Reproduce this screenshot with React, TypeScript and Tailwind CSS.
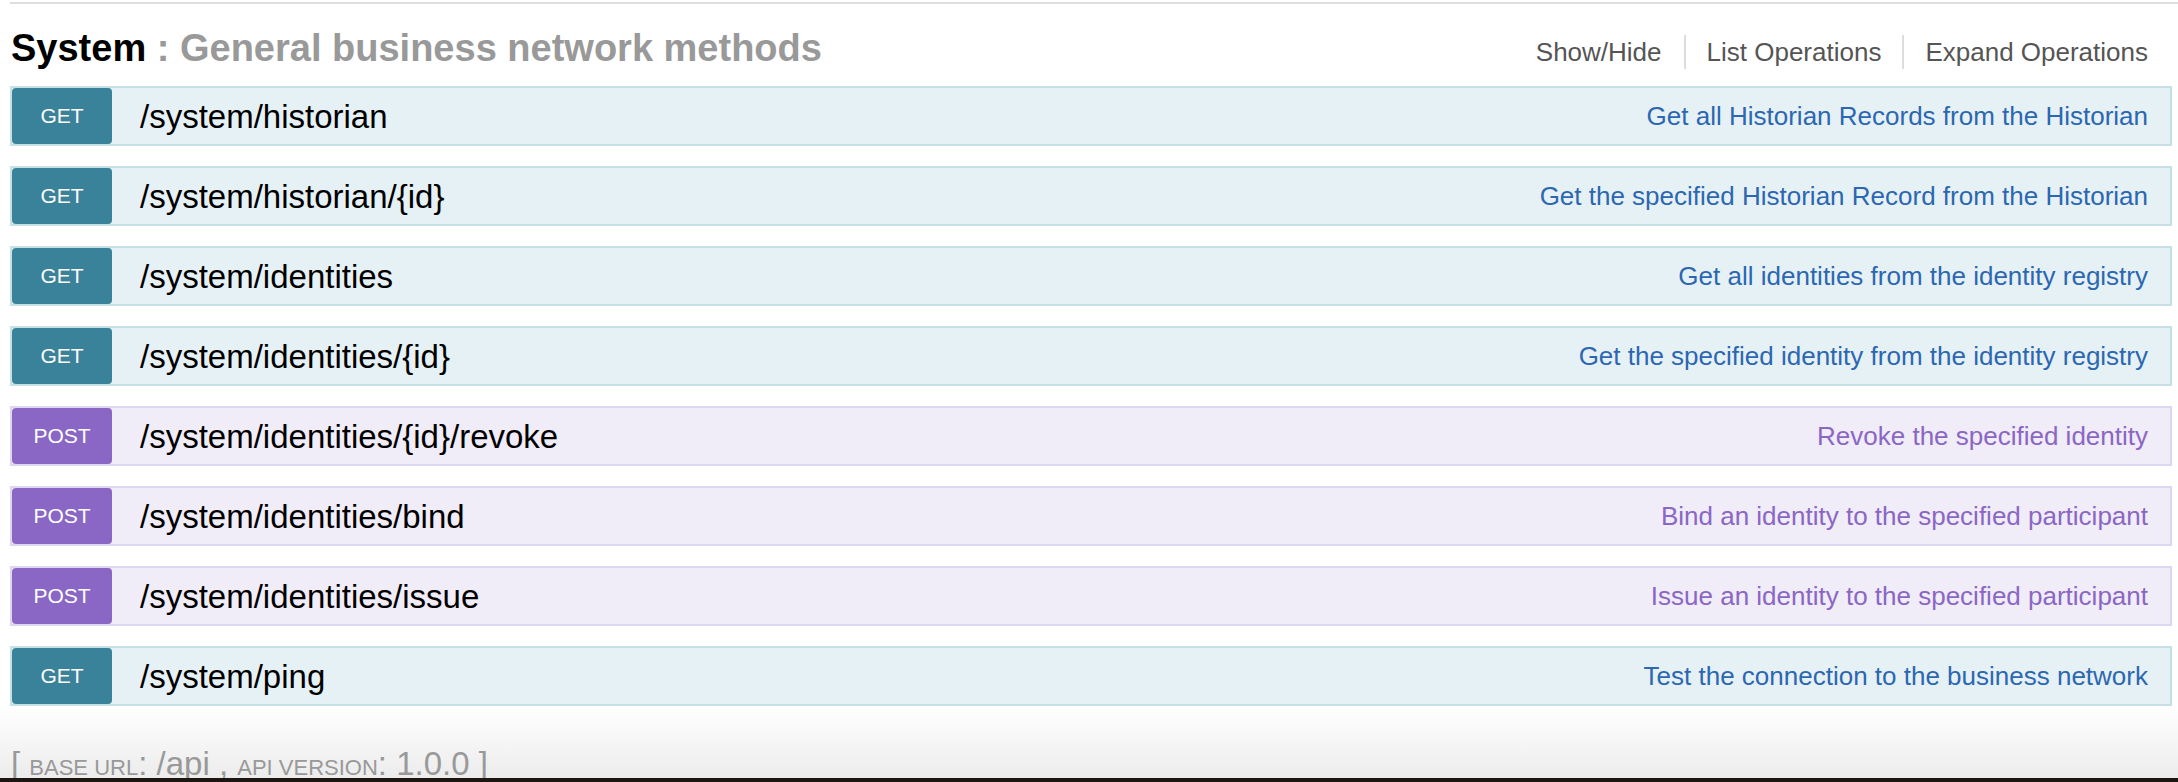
type Method = "GET" | "POST";

interface Endpoint {
  method: Method;
  path: string;
  summary: string;
}

const ENDPOINTS: Endpoint[] = [
  { method: "GET", path: "/system/historian", summary: "Get all Historian Records from the Historian" },
  { method: "GET", path: "/system/historian/{id}", summary: "Get the specified Historian Record from the Historian" },
  { method: "GET", path: "/system/identities", summary: "Get all identities from the identity registry" },
  { method: "GET", path: "/system/identities/{id}", summary: "Get the specified identity from the identity registry" },
  { method: "POST", path: "/system/identities/{id}/revoke", summary: "Revoke the specified identity" },
  { method: "POST", path: "/system/identities/bind", summary: "Bind an identity to the specified participant" },
  { method: "POST", path: "/system/identities/issue", summary: "Issue an identity to the specified participant" },
  { method: "GET", path: "/system/ping", summary: "Test the connection to the business network" },
];

const OPERATIONS = ["Show/Hide", "List Operations", "Expand Operations"];

// colour sets per http verb
const THEME = {
  GET: {
    row: "bg-[#e6f1f5] border-[#c6e0e8]",
    badge: "bg-[#3a819a]",
    summary: "text-[#2c67b1]",
  },
  POST: {
    row: "bg-[#f0ecf8] border-[#ddd6f0]",
    badge: "bg-[#8a67c5]",
    summary: "text-[#8a67c5]",
  },
};

function OperationRow({ op }: { op: Endpoint }) {
  const theme = THEME[op.method];
  return (
    <div className={`flex h-[60px] items-center border-2 ${theme.row}`}>
      <div
        className={`flex h-[56px] w-[100px] shrink-0 items-center justify-center rounded-[4px] text-[21px] text-white ${theme.badge}`}
      >
        {op.method}
      </div>
      <div className="ml-[28px] text-[33px] leading-none text-black">{op.path}</div>
      <div className={`ml-auto pr-[22px] text-[26px] leading-none ${theme.summary}`}>{op.summary}</div>
    </div>
  );
}

export default function App() {
  return (
    <div className="relative h-[782px] w-full overflow-hidden bg-white font-['Liberation_Sans',Arial,Helvetica,sans-serif]">
      {/* top rule */}
      <div className="ml-[10px] mt-[2px] h-[2px] bg-[#dedede]" />

      <div className="pl-[10px] pr-[6px]">
        {/* resource heading */}
        <div className="h-[82px] pt-[25px]">
          <div className="flex items-baseline justify-between pl-[1px]">
            <h2 className="text-[38px] font-bold leading-[38px] text-black">
              System <span className="text-[#999999]">: General business network methods</span>
            </h2>
            <ul className="flex pr-[24px]">
              {OPERATIONS.map((label, i) => (
                <li
                  key={label}
                  className={`text-[26px] leading-[34px] text-[#555555] ${
                    i === 0 ? "pr-[22px]" : i === OPERATIONS.length - 1 ? "border-l-2 border-[#dddddd] pl-[21px]" : "border-l-2 border-[#dddddd] px-[21px]"
                  }`}
                >
                  {label}
                </li>
              ))}
            </ul>
          </div>
        </div>

        {/* operations */}
        <div className="flex flex-col gap-[20px]">
          {ENDPOINTS.map((op) => (
            <OperationRow key={op.path} op={op} />
          ))}
        </div>
      </div>

      {/* footer */}
      <div className="h-[72px] overflow-hidden bg-gradient-to-b from-white to-[#ececec] pl-[11px] pt-[42px]">
        <h4 className="text-[33px] leading-[32px] text-[#999999]">
          [ <span className="text-[22px] uppercase">base url</span>: /api ,{" "}
          <span className="text-[22px] uppercase">api version</span>: 1.0.0 ]
        </h4>
      </div>
      <div className="h-[4px] bg-[#1c1512]" />
    </div>
  );
}
